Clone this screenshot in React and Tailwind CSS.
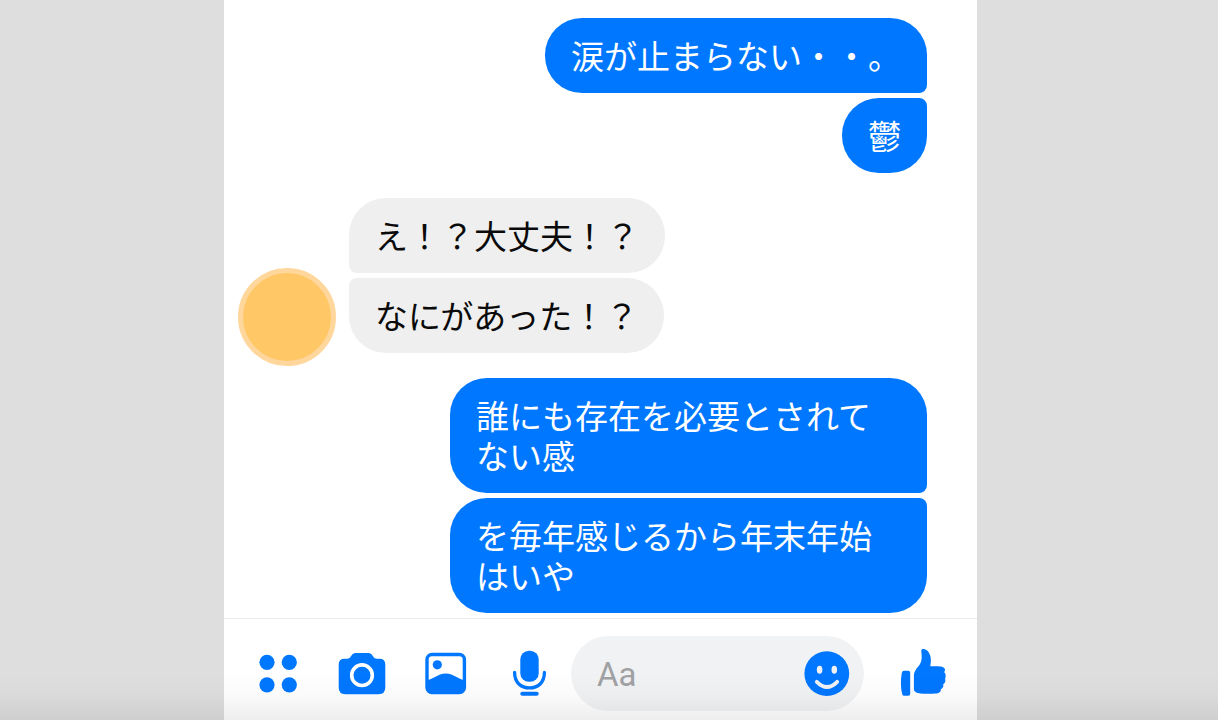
import React from "react";

const groups = [
  { from: "me", messages: ["涙が止まらない・・。", "鬱"] },
  { from: "friend", messages: ["え！？大丈夫！？", "なにがあった！？"] },
  {
    from: "me",
    messages: ["誰にも存在を必要とされてない感", "を毎年感じるから年末年始はいや"],
  },
];

function bubbleCorners(mine, index, count) {
  const first = index === 0;
  const last = index === count - 1;
  if (mine) {
    return `${first ? "" : "rounded-tr-lg"} ${last ? "" : "rounded-br-lg"}`;
  }
  return `${first ? "" : "rounded-tl-lg"} ${last ? "" : "rounded-bl-lg"}`;
}

function Bubble({ mine, corners, children }) {
  return (
    <p
      className={`max-w-[477px] rounded-[37px] px-[26px] pt-[17px] pb-[18px] text-[33px] leading-[40px] ${
        mine ? "bg-[#0077ff] text-white" : "bg-[#efefef] text-[#0a0a0a]"
      } ${corners}`}
    >
      {children}
    </p>
  );
}

function MessageGroup({ from, messages }) {
  const mine = from === "me";
  return (
    <li className={`flex items-end gap-[13px] ${mine ? "justify-end pr-[50px]" : "pl-[14px]"}`}>
      {!mine && (
        <div className="-mb-[13px] size-[98px] shrink-0 rounded-full border-5 border-[#ffd79d] bg-[#ffc766]" />
      )}
      <div className={`flex flex-col gap-[5px] ${mine ? "items-end" : "items-start"}`}>
        {messages.map((text, i) => (
          <Bubble key={text} mine={mine} corners={bubbleCorners(mine, i, messages.length)}>
            {text}
          </Bubble>
        ))}
      </div>
    </li>
  );
}

function IconButton({ label, children }) {
  return (
    <button type="button" aria-label={label} className="size-12 shrink-0 text-[#0077ff]">
      <svg viewBox="0 0 48 48" className="size-12 overflow-visible" fill="currentColor" aria-hidden="true">
        {children}
      </svg>
    </button>
  );
}

function Composer() {
  return (
    <form
      className="flex items-center border-t border-[#ebebeb] pt-[17px] pr-[29px] pb-[9px] pl-[30px]"
      onSubmit={(e) => e.preventDefault()}
    >
      <div className="flex gap-9">
        <IconButton label="メニュー">
          <circle cx="13" cy="12.3" r="7.6" />
          <circle cx="35.3" cy="12.3" r="7.6" />
          <circle cx="13" cy="34.8" r="7.6" />
          <circle cx="35.3" cy="34.8" r="7.6" />
        </IconButton>
        <IconButton label="カメラ">
          <path d="M6.5 8.7H9C13.5 8.7 12.8 2.9 17.8 2.9H30.2C35.2 2.9 34.5 8.7 39 8.7H41.5Q47.3 8.7 47.3 14.5V37.5Q47.3 44.2 40.6 44.2H7.4Q.7 44.2 .7 37.5V14.5Q.7 8.7 6.5 8.7Z" />
          <circle cx="24" cy="25.2" r="10.3" fill="none" stroke="#fff" strokeWidth="3.6" />
        </IconButton>
        <IconButton label="写真">
          <rect x="5" y="4.5" width="37.4" height="38" rx="5" fill="none" stroke="currentColor" strokeWidth="3.4" />
          <circle cx="15.3" cy="14.8" r="4.6" />
          <path d="M5 30.4C10.5 28.8 15 25.7 18 24.5Q23.7 22.3 29.4 24.5C32.5 25.7 37 28.8 42.4 30.4V38Q42.4 42.5 38 42.5H9.5Q5 42.5 5 38Z" />
        </IconButton>
        <IconButton label="マイク">
          <rect x="14.3" y=".8" width="18.4" height="31" rx="8.6" />
          <path
            d="M8.6 22.5C8.6 32.5 15 37.9 23.5 37.9S38.4 32.5 38.4 22.5"
            fill="none"
            stroke="currentColor"
            strokeWidth="3.3"
            strokeLinecap="round"
          />
          <rect x="14.3" y="41.8" width="18.4" height="4" rx="2" />
        </IconButton>
      </div>
      <div className="mr-9 ml-[17px] flex h-[75px] min-w-0 flex-1 items-center rounded-full bg-[#f1f2f4] pr-[13px] pl-[26px]">
        <input
          type="text"
          aria-label="メッセージ"
          placeholder="Aa"
          className="min-w-0 flex-1 bg-transparent pt-[2px] font-['Roboto','Noto_Sans_CJK_JP',sans-serif] text-[33px] leading-[40px] text-[#0a0a0a] outline-none placeholder:text-[#a0a1a3]"
        />
        <IconButton label="絵文字">
          <circle cx="23.8" cy="23.6" r="22.4" />
          <ellipse cx="16.6" cy="19.8" rx="2.8" ry="4" fill="#f1f2f4" />
          <ellipse cx="31.3" cy="19.8" rx="2.8" ry="4" fill="#f1f2f4" />
          <path
            d="M13.8 31.8Q24 42 34.2 31.8"
            fill="none"
            stroke="#f1f2f4"
            strokeWidth="3.8"
            strokeLinecap="round"
          />
        </IconButton>
      </div>
      <IconButton label="いいね">
        <path d="M4 20.8H8.2Q10.2 20.8 10.2 22.8V43.8Q10.2 45.8 8.2 45.8H4.2Q2.6 45.8 2.2 44.2Q.9 39 .9 33.3T1.8 23Q2.2 20.8 4 20.8Z" />
        <path d="M21.3 1.3C21.1-.3 22-.9 23.3-.9C27.8-.9 31 4.5 30.9 10.5C30.9 12.8 30.3 14.6 30.4 16.2H38.5C42.5 16.4 45.5 17.7 45 20.3C44.9 21.2 44.5 21.7 44.1 22.1C45.6 23.2 46.3 26.2 45.1 28.7C46 31.5 44.9 33 43.2 34.3C44 36.6 42.5 38.5 40.8 39.2C41.2 42 39 43.2 35.5 43.6C32 44 22.5 44 18 43C15.3 42.4 13.9 41.2 13.9 38.7V26C13.9 21.5 16.5 18.8 19 15.6C21.8 12 22.1 8 21.3 1.3Z" />
      </IconButton>
    </form>
  );
}

export default function App() {
  return (
    <div className="relative grid min-h-screen grid-cols-[224fr_753fr_241fr] bg-[#dedede] font-['Noto_Sans_CJK_JP',sans-serif]">
      <main className="col-start-2 flex min-w-0 flex-col justify-between bg-white">
        <ul className="flex flex-col gap-[25px] pt-[18px] pb-[5px]">
          {groups.map((group, i) => (
            <MessageGroup key={i} from={group.from} messages={group.messages} />
          ))}
        </ul>
        <Composer />
      </main>
      <div className="pointer-events-none absolute inset-x-0 bottom-0 h-12 bg-linear-to-b from-transparent via-black/2 to-black/7" />
    </div>
  );
}
